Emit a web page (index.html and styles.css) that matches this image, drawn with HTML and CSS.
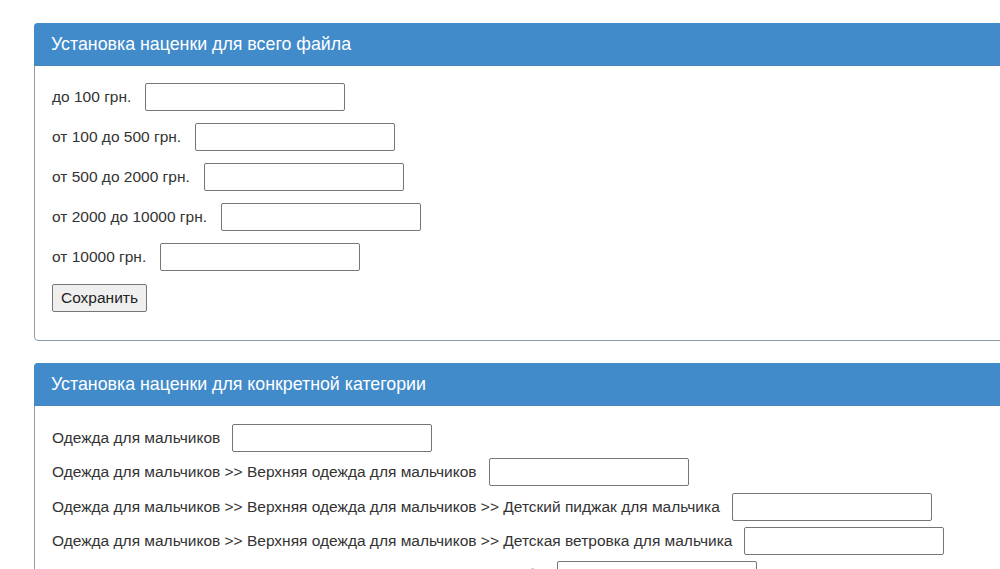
FILE: index.html
```html
<!DOCTYPE html>
<html lang="ru">
<head>
<meta charset="utf-8">
<title>Наценки</title>
<link rel="stylesheet" href="styles.css">
</head>
<body>
<div class="page">
  <section class="panel">
    <div class="panel-heading">Установка наценки для всего файла</div>
    <form class="panel-body ranges">
      <div class="row"><label>до 100 грн.</label><input type="text"></div>
      <div class="row"><label>от 100 до 500 грн.</label><input type="text"></div>
      <div class="row"><label>от 500 до 2000 грн.</label><input type="text"></div>
      <div class="row"><label>от 2000 до 10000 грн.</label><input type="text"></div>
      <div class="row"><label>от 10000 грн.</label><input type="text"></div>
      <div class="row"><button type="button">Сохранить</button></div>
    </form>
  </section>
  <section class="panel">
    <div class="panel-heading">Установка наценки для конкретной категории</div>
    <form class="panel-body cats">
      <div class="row"><label>Одежда для мальчиков</label><input type="text"></div>
      <div class="row"><label>Одежда для мальчиков &gt;&gt; Верхняя одежда для мальчиков</label><input type="text"></div>
      <div class="row"><label>Одежда для мальчиков &gt;&gt; Верхняя одежда для мальчиков &gt;&gt; Детский пиджак для мальчика</label><input type="text"></div>
      <div class="row"><label>Одежда для мальчиков &gt;&gt; Верхняя одежда для мальчиков &gt;&gt; Детская ветровка для мальчика</label><input type="text"></div>
      <div class="row"><label>Одежда для мальчиков &gt;&gt; Верхняя одежда для мальчиков &gt;&gt; Шубы</label><input type="text"></div>
    </form>
  </section>
</div>
</body>
</html>
```

FILE: styles.css
```css
html, body {
  margin: 0;
  padding: 0;
  overflow: hidden;
  background: #fff;
}
body {
  font-family: "Liberation Sans", Arial, sans-serif;
  color: #333;
  font-size: 15.5px;
}
.page {
  padding: 23px 0 0 34px;
  overflow: hidden;
  height: 569px;
  box-sizing: border-box;
}
.panel {
  margin-right: -60px;
  border: 1px solid #8e9ca8;
  border-radius: 4px;
  margin-bottom: 22px;
  background: #fff;
}
.panel-heading {
  background: #428bca;
  color: #fff;
  font-size: 17.8px;
  height: 43px;
  line-height: 43px;
  margin: -1px -1px 0 -1px;
  padding: 0 0 0 17px;
  border-radius: 4px 4px 0 0;
  border-bottom: 1px solid #4a86bb;
  box-sizing: border-box;
}
.panel-body {
  margin: 0;
  padding: 17px 0 0 17px;
  display: flex;
  flex-direction: column;
}
.ranges {
  gap: 12px;
  padding-bottom: 28px;
}
.ranges .row:last-child {
  margin-top: 1px;
}
.cats {
  gap: 6.3px;
  padding-top: 18px;
}
.row {
  display: flex;
  align-items: center;
  gap: 14px;
  height: 28px;
}
.cats .row {
  gap: 12px;
}
input {
  width: 200px;
  height: 28px;
  box-sizing: border-box;
  border: 1px solid #767676;
  border-radius: 2px;
  padding: 1px 2px;
  margin: 0;
  font: inherit;
  background: #fff;
}
button {
  font: inherit;
  color: #222;
  height: 28px;
  width: 95px;
  padding: 0;
  background: #efefef;
  border: 1px solid #767676;
  border-radius: 2px;
}
label {
  white-space: nowrap;
}
```
